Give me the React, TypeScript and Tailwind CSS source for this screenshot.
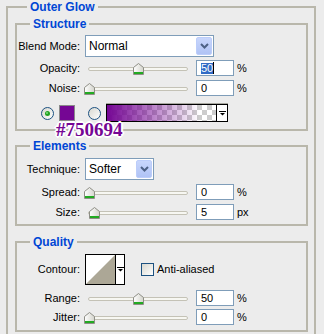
const Thumb = () => (
  <svg width="11" height="12" viewBox="0 0 11 12">
    <defs>
      <linearGradient id="thumbGrad" x1="0" y1="0" x2="1" y2="0">
        <stop offset="0" stopColor="#ffffff" />
        <stop offset="1" stopColor="#d4d4cc" />
      </linearGradient>
    </defs>
    <path d="M5.5 0.5 L10.5 4.5 V11.5 H0.5 V4.5 Z" fill="url(#thumbGrad)" stroke="#8e8e86" />
    <rect x="1" y="9" width="9" height="2" fill="#22aa22" />
  </svg>
);

// pos = thumb offset in px from the left end of the track
const Slider = ({ pos }: { pos: number }) => (
  <div className="relative w-[108px] h-[16px] ml-[4px] shrink-0">
    <div className="mx-[4px] mt-[7px] h-[4px] rounded-full border border-[#c4c2b6] bg-[#f7f7f2]" />
    <div className="absolute top-[3px]" style={{ left: `${pos}px` }}>
      <Thumb />
    </div>
  </div>
);

const Radio = ({ checked }: { checked?: boolean }) => (
  <svg width="13" height="13" viewBox="0 0 13 13" className="shrink-0">
    <defs>
      <linearGradient id="radioGrad" x1="0" y1="0" x2="1" y2="1">
        <stop offset="0" stopColor="#d6d6ce" />
        <stop offset="1" stopColor="#ffffff" />
      </linearGradient>
    </defs>
    <circle cx="6.5" cy="6.5" r="6" fill="url(#radioGrad)" stroke="#1c5180" />
    {checked && <circle cx="6.5" cy="6.5" r="2.5" fill="#21a121" />}
    {checked && <circle cx="6" cy="6" r="1" fill="#7fdc7f" />}
  </svg>
);

const DropArrow = () => (
  <svg width="7" height="5" viewBox="0 0 7 5">
    <rect x="0" y="0" width="7" height="1" fill="#000" />
    <polygon points="1,2 6,2 3.5,4.5" fill="#000" />
  </svg>
);

const Chevron = () => (
  <svg width="9" height="6" viewBox="0 0 9 6">
    <path d="M1 1 L4.5 4.5 L8 1" stroke="#4d6185" strokeWidth="2" fill="none" />
  </svg>
);

const Select = ({ value, width }: { value: string; width: string }) => (
  <div className={`${width} h-[22px] ml-[5px] flex items-center border border-[#7f9db9] bg-white shrink-0`}>
    <span className="pl-[3px] text-[12px]">{value}</span>
    <div className="ml-auto mr-[1px] w-[16px] h-[18px] flex items-center justify-center rounded-[2px] border border-[#bccdfa] bg-gradient-to-b from-[#c8d6fc] to-[#b0c3f5]">
      <Chevron />
    </div>
  </div>
);

const NumInput = ({ children }: { children: React.ReactNode }) => (
  <div className="w-[38px] h-[16px] ml-[4px] pl-[4px] flex items-center border border-[#7f9db9] bg-white shrink-0 leading-none">
    {children}
  </div>
);

const Label = ({ children }: { children: React.ReactNode }) => (
  <span className="w-[63px] text-right shrink-0">{children}</span>
);

const SliderRow = ({
  label,
  pos,
  value,
  unit,
  className,
}: {
  label: string;
  pos: number;
  value: React.ReactNode;
  unit: string;
  className: string;
}) => (
  <div className={`flex items-center h-[16px] ${className}`}>
    <Label>{label}</Label>
    <Slider pos={pos} />
    <NumInput>{value}</NumInput>
    <span className="ml-[3px]">{unit}</span>
  </div>
);

const GradientPreview = () => (
  <svg width="109" height="16" viewBox="0 0 109 16">
    <defs>
      <pattern id="checker" width="10" height="10" patternUnits="userSpaceOnUse">
        <rect width="10" height="10" fill="#ffffff" />
        <rect width="5" height="5" fill="#cccccc" />
        <rect x="5" y="5" width="5" height="5" fill="#cccccc" />
      </pattern>
      <linearGradient id="purpleFade" x1="0" y1="0" x2="1" y2="0">
        <stop offset="0" stopColor="#750694" stopOpacity="1" />
        <stop offset="0.85" stopColor="#750694" stopOpacity="0" />
      </linearGradient>
    </defs>
    <rect width="109" height="16" fill="url(#checker)" />
    <rect width="109" height="16" fill="url(#purpleFade)" />
  </svg>
);

const ContourPreview = () => (
  <svg width="29" height="29" viewBox="0 0 29 29">
    <polygon points="0,0 29,0 0,29" fill="#ffffff" />
    <polygon points="29,0 29,29 0,29" fill="#aca796" />
  </svg>
);

const legendCls = "px-[3px] font-bold text-[#0046d5] leading-[14px] text-[12px]";
const boxCls = "border-2 border-[#b9b7ab] min-w-0";

export default function App() {
  return (
    <div className="w-[324px] h-[334px] overflow-hidden bg-[#ececec] font-['Liberation_Sans',Arial,sans-serif] text-[11px] text-black pl-[6px] pr-[8px]">
      <fieldset className={`${boxCls} pl-[7px] pr-[6px] pt-[3px] pb-[10px]`}>
        <legend className={`${legendCls} ml-[12px]`}>Outer Glow</legend>

        {/* Structure */}
        <fieldset className={`${boxCls} pt-[4px] pb-[7px]`}>
          <legend className={`${legendCls} ml-[13px]`}>Structure</legend>
          <div className="flex items-center">
            <Label>Blend Mode:</Label>
            <Select value="Normal" width="w-[129px]" />
          </div>
          <SliderRow
            label="Opacity:"
            pos={49}
            unit="%"
            className="mt-[3px]"
            value={
              <>
                <span className="bg-[#316ac5] text-white">50</span>
                <span className="w-[1px] h-[12px] bg-black" />
              </>
            }
          />
          <SliderRow label="Noise:" pos={0} unit="%" className="mt-[4px]" value="0" />
          <div className="relative flex items-center h-[18px] mt-[8px] pl-[24px]">
            <Radio checked />
            <div className="ml-[5px] w-[16px] h-[16px] border border-[#8a8a8a] bg-[#750694]" />
            <div className="ml-[13px]">
              <Radio />
            </div>
            <div className="ml-[5px] flex h-[18px] border border-black bg-white shadow-[0_-1px_0_#a8a8a0]">
              <GradientPreview />
              <div className="w-[11px] flex items-center justify-center border-l border-black">
                <DropArrow />
              </div>
            </div>
            <span className="absolute top-[16px] left-[39px] font-['Liberation_Serif','Times_New_Roman',serif] font-bold text-[19px] leading-[19px] text-[#750694] [text-shadow:0_0_2px_#fff,1px_1px_0_#fff,-1px_-1px_0_#fff,1px_-1px_0_#fff,-1px_1px_0_#fff,2px_0_0_#fff,-2px_0_0_#fff,0_2px_0_#fff,0_-2px_0_#fff]">
              #750694
            </span>
          </div>
        </fieldset>

        {/* Elements */}
        <fieldset className={`${boxCls} mt-[8px] pt-[5px] pb-[4px]`}>
          <legend className={`${legendCls} ml-[13px]`}>Elements</legend>
          <div className="flex items-center">
            <Label>Technique:</Label>
            <Select value="Softer" width="w-[69px]" />
          </div>
          <SliderRow label="Spread:" pos={0} unit="%" className="mt-[4px]" value="0" />
          <SliderRow label="Size:" pos={5} unit="px" className="mt-[4px]" value="5" />
        </fieldset>

        {/* Quality */}
        <fieldset className={`${boxCls} mt-[9px] pt-[5px] pb-[5px]`}>
          <legend className={`${legendCls} ml-[13px]`}>Quality</legend>
          <div className="flex items-center">
            <Label>Contour:</Label>
            <div className="ml-[5px] flex h-[31px] border border-black bg-white">
              <ContourPreview />
              <div className="w-[9px] flex items-center justify-center border-l border-black">
                <DropArrow />
              </div>
            </div>
            <div className="ml-[16px] w-[13px] h-[13px] border border-[#1c5180] bg-gradient-to-br from-[#d8d8d0] to-white" />
            <span className="ml-[3px]">Anti-aliased</span>
          </div>
          <SliderRow label="Range:" pos={49} unit="%" className="mt-[5px]" value="50" />
          <SliderRow label="Jitter:" pos={0} unit="%" className="mt-[3px]" value="0" />
        </fieldset>
      </fieldset>
    </div>
  );
}
